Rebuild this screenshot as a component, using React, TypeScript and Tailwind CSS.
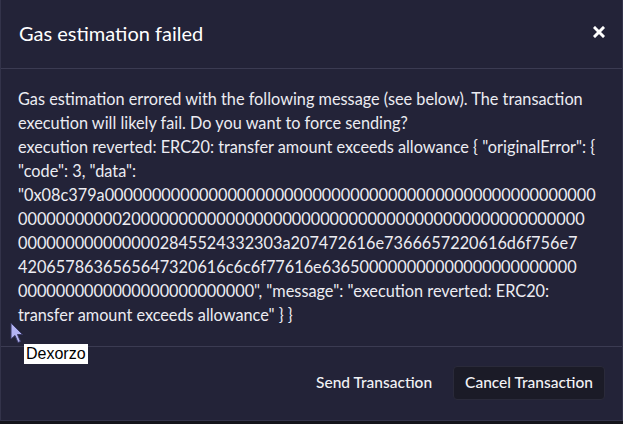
import React from "react";

const Z = (n: number) => "0".repeat(n);

const MESSAGE_LINES = [
  "Gas estimation errored with the following message (see below). The transaction",
  "execution will likely fail. Do you want to force sending?",
  'execution reverted: ERC20: transfer amount exceeds allowance { "originalError": {',
  '"code": 3, "data":',
  '"0x08c379a0' + Z(51),
  Z(11) + "20" + Z(47),
  Z(15) + "28" + "45524332303a207472616e7366657220616d6f756e7",
  "4206578636565647320616c6c6f77616e6365" + Z(23),
  Z(25) + '", "message": "execution reverted: ERC20:',
  'transfer amount exceeds allowance" } }',
];

const CloseIcon = () => (
  <svg width="12" height="12" viewBox="0 0 12 12" fill="none">
    <path d="M2 2L10 10M10 2L2 10" stroke="white" strokeWidth="3" strokeLinecap="square" />
  </svg>
);

const Cursor = () => (
  <svg width="14" height="22" viewBox="0 0 14 22">
    <path
      d="M1 1L1 17L5 13.5L8 20.5L10.5 19.5L7.5 12.5L12.5 12.5Z"
      fill="#b3b3f4"
      stroke="#3a3a66"
      strokeWidth="1"
      strokeLinejoin="round"
    />
  </svg>
);

export default function App() {
  return (
    <div className="h-[424px] overflow-hidden bg-[#14141b] font-['Lato','Noto_Sans',sans-serif]">
      <div className="relative flex h-[421px] flex-col border-x border-b border-[#33334a] bg-[#232338] text-[#ececf2]">
        <div className="flex items-start justify-between border-b border-[#3b3b52] pt-[19px] pb-[21px] pl-[18px] pr-[17px]">
          <h2 className="text-[20px] leading-7 text-white">Gas estimation failed</h2>
          <button className="mt-[7px]">
            <CloseIcon />
          </button>
        </div>

        <div className="px-[17px] pt-[18px] pb-[19px] text-[16.3px] leading-6">
          {MESSAGE_LINES.map((line, i) => (
            <div key={i} className="whitespace-nowrap">
              {line}
            </div>
          ))}
        </div>

        <div className="flex items-center justify-end gap-[9px] border-t border-[#3b3b52] pr-[17px] pt-[19px]">
          <button className="h-[34px] px-3 text-[15.5px] font-medium text-[#f2f2f5]">Send Transaction</button>
          <button className="h-[34px] rounded border border-[#2a2a3a] bg-[#1b1b27] px-[11px] text-[15.5px] font-medium text-[#f2f2f5]">
            Cancel Transaction
          </button>
        </div>

        <div className="absolute left-[9px] top-[322px]">
          <Cursor />
        </div>
        <div className="absolute left-[23px] top-[344px] bg-white px-[2px] text-[16px] leading-5 text-black font-['Liberation_Sans',sans-serif]">
          Dexorzo
        </div>
      </div>
    </div>
  );
}
